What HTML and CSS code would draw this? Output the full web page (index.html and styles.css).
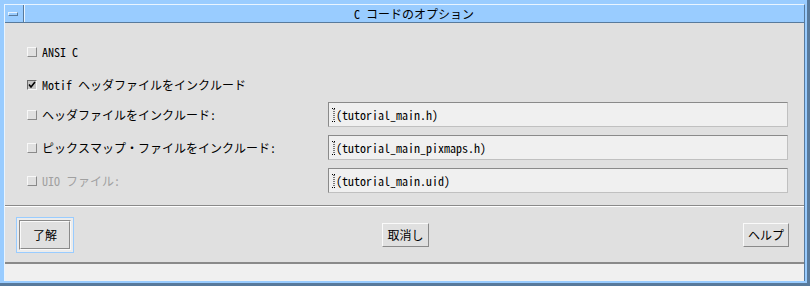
FILE: index.html
```html
<!DOCTYPE html>
<html lang="ja">
<head>
  <meta charset="UTF-8" />
  <title>C コードのオプション</title>
  <link rel="stylesheet" href="styles.css">
</head>
<body>

<div class="window">
  <div class="frame">

    <div class="titlebar">
      <div class="menu-btn"><span class="menu-bar"></span></div>
      <div class="title">C コードのオプション</div>
    </div>

    <div class="panel">
      <div class="options">
        <div class="row plain">
          <label class="check"><span class="box"></span>ANSI C</label>
        </div>
        <div class="row plain">
          <label class="check"><span class="box on"><svg viewBox="0 0 8 8"><path d="M1 3.5 L3 6 L7 1" fill="none" stroke="#000" stroke-width="1.6"/></svg></span>Motif ヘッダファイルをインクルード</label>
        </div>
        <div class="row">
          <label class="check"><span class="box"></span>ヘッダファイルをインクルード:</label>
          <div class="field"><svg class="ibeam" viewBox="0 0 4 14"><path d="M0 .5h4M0 13.5h4M2 1v12" stroke="#000" stroke-dasharray="1 1"/></svg>(tutorial_main.h)</div>
        </div>
        <div class="row">
          <label class="check"><span class="box"></span>ピックスマップ・ファイルをインクルード:</label>
          <div class="field"><svg class="ibeam" viewBox="0 0 4 14"><path d="M0 .5h4M0 13.5h4M2 1v12" stroke="#000" stroke-dasharray="1 1"/></svg>(tutorial_main_pixmaps.h)</div>
        </div>
        <div class="row">
          <label class="check disabled"><span class="box"></span>UIO ファイル:</label>
          <div class="field"><svg class="ibeam" viewBox="0 0 4 14"><path d="M0 .5h4M0 13.5h4M2 1v12" stroke="#000" stroke-dasharray="1 1"/></svg>(tutorial_main.uid)</div>
        </div>
      </div>

      <div class="actions">
        <div class="ring"><div class="sunk"><button class="btn wide">了解</button></div></div>
        <button class="btn">取消し</button>
        <button class="btn help">ヘルプ</button>
      </div>
    </div>

    <div class="status"></div>
  </div>
</div>

</body>
</html>
```

FILE: styles.css
```css
:root {
  --blue: #99ccff;
  --slate: #587a9c;
  --face: #e0e0e0;
  --light: #f0f0f0;
  --shadow: #8a8a8a;
}
* {
  box-sizing: border-box;
}
body {
  margin: 0;
  font-family: "Noto Sans Mono CJK JP", "Noto Sans CJK JP", "DejaVu Sans Mono", monospace;
  font-size: 12px;
  color: #000;
}
.window {
  width: 810px;
  height: 286px;
  background: var(--blue);
  padding: 4px 2px 2px 4px;
  border-right: 3px solid var(--slate);
  border-bottom: 3px solid var(--slate);
}
.frame {
  height: 100%;
  display: flex;
  flex-direction: column;
  border-left: 1px solid #e8f4ff;
  border-top: 1px solid #e8f4ff;
  border-right: 1px solid var(--slate);
}

/* title bar */
.titlebar {
  display: flex;
  height: 18px;
  background: var(--blue);
  border-bottom: 1px solid var(--slate);
}
.menu-btn {
  width: 19px;
  display: flex;
  align-items: center;
  justify-content: center;
  border-right: 1px solid var(--slate);
  box-shadow: 1px 0 0 #e8f4ff;
  padding-right: 2px;
}
.menu-bar {
  display: block;
  width: 10px;
  height: 4px;
  border: 1px solid;
  border-color: #e8f4ff var(--slate) var(--slate) #e8f4ff;
}
.title {
  flex: 1;
  text-align: center;
  line-height: 17px;
}

/* main panel */
.panel {
  background: var(--face);
  border-bottom: 2px solid var(--shadow);
}
.options {
  padding: 9px 16px 8px 22px;
  border-bottom: 1px solid var(--shadow);
  box-shadow: 0 1px 0 #fff;
}
.row {
  height: 33px;
  display: flex;
  align-items: center;
}
.row.plain {
  padding-top: 6px;
}
.check {
  width: 301px;
  display: flex;
  align-items: center;
  white-space: pre;
}
.check.disabled {
  color: #a0a0a0;
}
.box {
  width: 10px;
  height: 10px;
  margin-right: 5px;
  border: 1px solid;
  border-color: #f8f8f8 #8a8a8a #8a8a8a #f8f8f8;
  background: var(--face);
  display: flex;
}
.box.on {
  background: #c4c4c4;
  border-color: #6a6a6a #f8f8f8 #f8f8f8 #6a6a6a;
}
.box svg {
  width: 8px;
  height: 8px;
}
.field {
  flex: 1;
  height: 25px;
  display: flex;
  align-items: center;
  padding-left: 3px;
  background: var(--light);
  border: 1px solid;
  border-color: #8a8a8a #c0c0c0 #c0c0c0 #8a8a8a;
}
.ibeam {
  width: 4px;
  height: 14px;
  margin-right: 0;
}

/* buttons */
.actions {
  height: 56px;
  display: grid;
  grid-template-columns: 1fr auto 1fr;
  align-items: center;
  padding: 1px 9px 0 11px;
}
.btn {
  font: inherit;
  color: #000;
  height: 24px;
  padding: 0 4px;
  background: var(--face);
  border: 1px solid;
  border-color: #fafafa #8a8a8a #8a8a8a #fafafa;
}
.help {
  justify-self: end;
  margin-right: 6px;
}
.ring {
  justify-self: start;
  border: 1px solid var(--blue);
  padding: 2px;
  background: #ececec;
}
.sunk {
  border: 1px solid;
  border-color: #8a8a8a #fafafa #fafafa #8a8a8a;
}
.btn.wide {
  display: block;
  width: 50px;
  height: 28px;
}

.status {
  flex: 1;
  background: var(--light);
}
```
